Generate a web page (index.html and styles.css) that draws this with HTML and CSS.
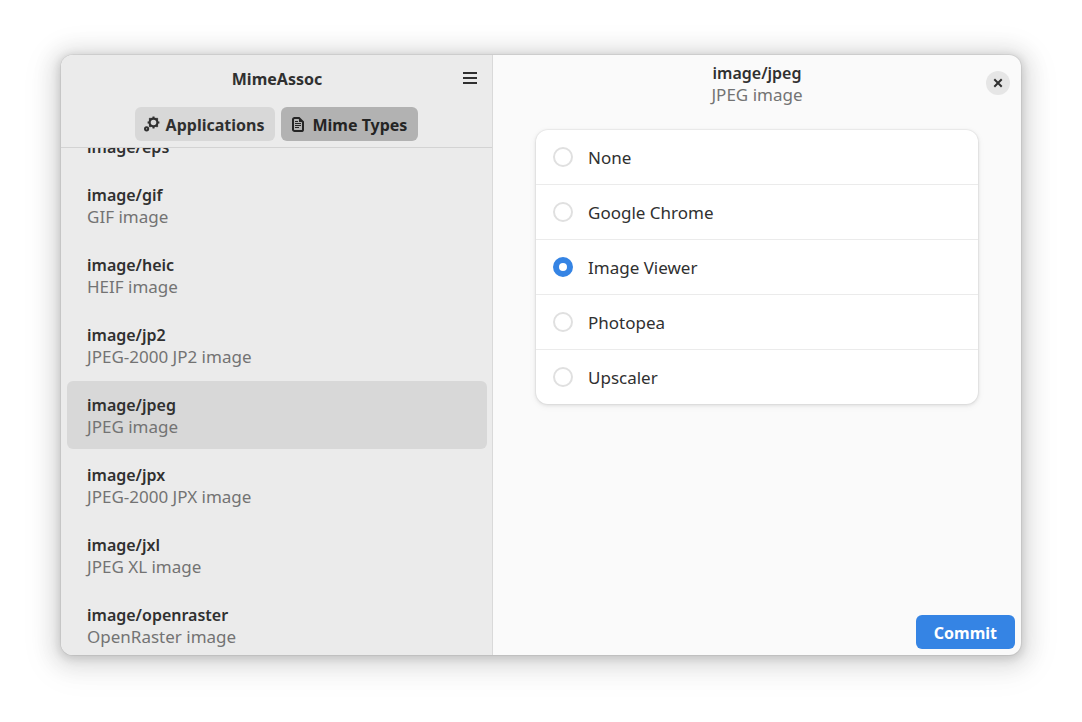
FILE: index.html
```html
<!DOCTYPE html>
<html lang="en">
<head>
<meta charset="utf-8">
<title>MimeAssoc</title>
<link rel="stylesheet" href="styles.css">
</head>
<body>
<div class="window">
  <aside class="sidebar">
    <header class="sidebar-header">
      <div class="title-row">
        <h1 class="title">MimeAssoc</h1>
        <button class="menu-button" type="button" aria-label="Main menu">
          <svg viewBox="0 0 16 16" width="16" height="16"><path d="M1 2h14v2H1zM1 7h14v2H1zM1 12h14v2H1z" fill="currentColor"/></svg>
        </button>
      </div>
      <nav class="switcher">
        <button class="tab" type="button">
          <svg viewBox="0 0 16 16" width="16" height="16" fill="none" stroke="currentColor">
            <circle cx="9.500" cy="6.500" r="3.900" stroke-width="2.200"/>
            <path d="M9.500 2.500V.6M9.500 12.400v-2M5.500 6.500H3.600M15.400 6.500h-2M6.700 3.700 5.300 2.300M13.700 10.700l-1.400-1.400M12.300 3.700l1.400-1.400M5.300 10.700l1.400-1.400" stroke-width="2"/>
            <circle cx="2.600" cy="12.800" r="1.600" stroke-width="2"/>
          </svg>
          <span class="label">Applications</span>
        </button>
        <button class="tab tab-active" type="button" aria-pressed="true">
          <svg viewBox="0 0 16 16" width="16" height="16" fill="none" stroke="currentColor">
            <path d="M4.500 2h4.500l4 4v7.400c0 .9-.7 1.600-1.600 1.600H4.600C3.700 15 3 14.300 3 13.400V3.600C3 2.700 3.700 2 4.500 2z" stroke-width="2"/>
            <path d="M9 2v4h4z" fill="currentColor" stroke="none"/>
            <path d="M5 5.500h3M5 7.500h6M5 9.500h6M5 11.500h4" stroke-width="1"/>
          </svg>
          <span class="label">Mime Types</span>
        </button>
      </nav>
    </header>
    <div class="list-view">
      <ul class="list">
        <li class="item item-short"><span class="name">image/eps</span></li>
        <li class="item"><span class="name">image/gif</span><span class="desc">GIF image</span></li>
        <li class="item"><span class="name">image/heic</span><span class="desc">HEIF image</span></li>
        <li class="item"><span class="name">image/jp2</span><span class="desc">JPEG-2000 JP2 image</span></li>
        <li class="item item-selected"><span class="name">image/jpeg</span><span class="desc">JPEG image</span></li>
        <li class="item"><span class="name">image/jpx</span><span class="desc">JPEG-2000 JPX image</span></li>
        <li class="item"><span class="name">image/jxl</span><span class="desc">JPEG XL image</span></li>
        <li class="item"><span class="name">image/openraster</span><span class="desc">OpenRaster image</span></li>
      </ul>
    </div>
  </aside>
  <main class="content">
    <header class="content-header">
      <div class="heading">
        <h2 class="name">image/jpeg</h2>
        <p class="desc">JPEG image</p>
      </div>
      <button class="close-button" type="button" aria-label="Close">
        <svg viewBox="0 0 16 16" width="16" height="16"><path d="M5 5l6 6M11 5l-6 6" stroke="currentColor" stroke-width="2" stroke-linecap="square"/></svg>
      </button>
    </header>
    <form class="form">
      <div class="card">
        <label class="option"><input class="radio" type="radio" name="app"><span class="label">None</span></label>
        <label class="option"><input class="radio" type="radio" name="app"><span class="label">Google Chrome</span></label>
        <label class="option"><input class="radio" type="radio" name="app" checked><span class="label">Image Viewer</span></label>
        <label class="option"><input class="radio" type="radio" name="app"><span class="label">Photopea</span></label>
        <label class="option"><input class="radio" type="radio" name="app"><span class="label">Upscaler</span></label>
      </div>
      <div class="actions"><button class="commit" type="button"><span class="label">Commit</span></button></div>
    </form>
  </main>
</div>
</body>
</html>
```
FILE: styles.css
```css
* { box-sizing: border-box; }

body {
  margin: 0;
  height: 100vh;
  padding: 55px 61px 67px;
  background: #fff;
  color: #303030;
  font-family: "Noto Sans", sans-serif;
  font-size: 17px;
  line-height: 22px;
}

h1, h2, p, ul { margin: 0; padding: 0; }
svg { display: block; }

button {
  border: 0;
  padding: 0;
  color: inherit;
  font: inherit;
  font-size: 16px;
  font-weight: 700;
}

.label { display: block; padding-top: 2px; }

.window {
  display: grid;
  grid-template-columns: 45% 1fr;
  height: 100%;
  border-radius: 12px;
  overflow: hidden;
  background: #fafafa;
  box-shadow: 0 0 0 1px rgba(0, 0, 0, .05), 0 2px 8px 2px rgba(0, 0, 0, .13),
    0 3px 20px 10px rgba(0, 0, 0, .09), 0 6px 32px 16px rgba(0, 0, 0, .04);
}

.sidebar {
  display: flex;
  flex-direction: column;
  min-height: 0;
  background: #ebebeb;
  border-right: 1px solid #d9d9d9;
}

.sidebar-header {
  border-bottom: 1px solid #d3d3d3;
  padding-bottom: 6px;
}

.title-row {
  display: grid;
  grid-template-columns: 34px 1fr 34px;
  align-items: center;
  height: 46px;
  padding: 0 5px 0 6px;
}

.title {
  grid-column: 2;
  padding-top: 2px;
  font-size: 16px;
  font-weight: 700;
  text-align: center;
}

.menu-button {
  display: grid;
  place-items: center;
  height: 34px;
  background: none;
}

.switcher {
  display: flex;
  justify-content: center;
  gap: 6px;
  padding-top: 6px;
}

.tab {
  display: flex;
  align-items: center;
  gap: 6px;
  height: 34px;
  padding: 0 11px 0 9px;
  border-radius: 6px;
  background: #d8d8d8;
}

.tab-active { background: #b2b2b2; color: #242424; }

.list-view { flex: 1; min-height: 0; overflow: hidden; }

.list {
  display: grid;
  gap: 2px;
  margin-top: -25px;
  padding: 0 5px 0 6px;
  list-style: none;
}

.item {
  display: flex;
  flex-direction: column;
  justify-content: center;
  height: 68px;
  padding: 2px 20px 0;
  border-radius: 6px;
}

.item-short { height: 46px; }
.item-selected { background: #d8d8d8; }

.name { font-size: 16px; font-weight: 600; }
.desc { color: #737373; }

.content { display: flex; flex-direction: column; }

.content-header {
  display: grid;
  grid-template-columns: 34px 1fr 34px;
  align-items: center;
  height: 56px;
  padding: 0 6px;
}

.heading { grid-column: 2; padding-top: 2px; text-align: center; }

.close-button {
  display: grid;
  place-items: center;
  justify-self: center;
  width: 24px;
  height: 24px;
  border-radius: 50%;
  background: #e6e6e6;
}

.form { flex: 1; display: flex; flex-direction: column; padding-top: 19px; }

.card {
  margin: 0 43px;
  border-radius: 12px;
  background: #fff;
  box-shadow: 0 0 0 1px rgba(0, 0, 0, .03), 0 1px 3px 1px rgba(0, 0, 0, .07),
    0 2px 6px 2px rgba(0, 0, 0, .03);
}

.option {
  display: flex;
  align-items: center;
  gap: 15px;
  height: 55px;
  padding: 0 17px;
}

.option:not(:last-child) { border-bottom: 1px solid #ebebeb; }
.option:last-child { height: 54px; }

.radio {
  appearance: none;
  width: 20px;
  height: 20px;
  margin: 0;
  border: 2px solid #e0e0e0;
  border-radius: 50%;
}

.radio:checked { border: 6px solid #3584e4; background: #fff; }

.actions {
  display: flex;
  justify-content: flex-end;
  margin-top: auto;
  padding: 6px;
}

.commit {
  height: 34px;
  padding: 0 18px;
  border-radius: 6px;
  background: #3584e4;
  color: #fff;
}
```
